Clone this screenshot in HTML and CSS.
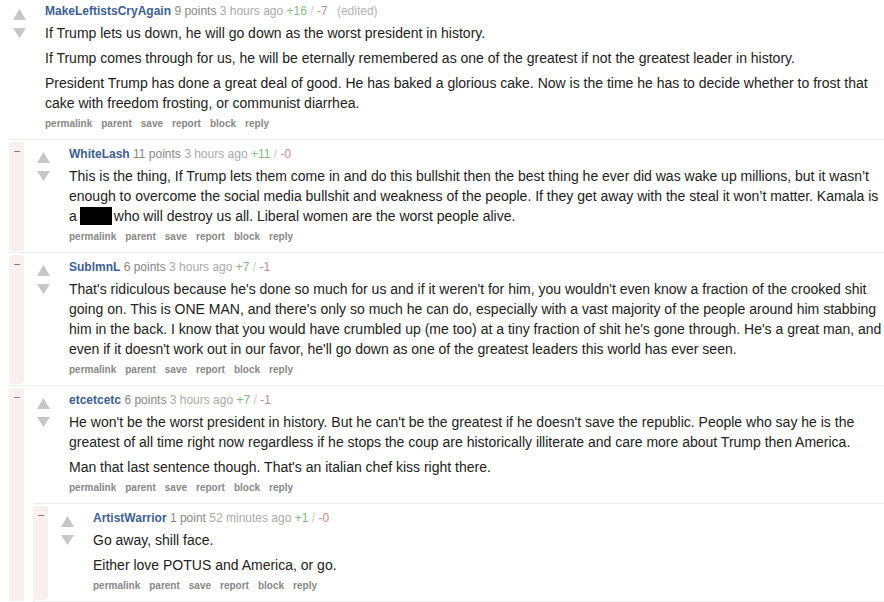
FILE: index.html
```html
<!DOCTYPE html>
<html>
<head>
<meta charset="utf-8">
<link rel="stylesheet" href="styles.css">
</head>
<body>
<div class="thread">
  <div class="comment root">
    <div class="inner">
      <div class="entry">
        <div class="midcol">
          <svg class="arrow" width="13" height="11" viewBox="0 0 13 11"><polygon points="6.5,0 13,11 0,11"/></svg>
          <svg class="arrow down" width="13" height="10" viewBox="0 0 13 10"><polygon points="0,0 13,0 6.5,10"/></svg>
        </div>
        <div class="content">
          <div class="tagline"><a class="author">MakeLeftistsCryAgain</a> <span class="score">9 points</span> <span class="time">3 hours ago</span> <span class="up">+16</span> <span class="slash">/</span> <span class="down">-7</span> <span class="edited">(edited)</span></div>
          <div class="body">
            <p>If Trump lets us down, he will go down as the worst president in history.</p>
            <p>If Trump comes through for us, he will be eternally remembered as one of the greatest if not the greatest leader in history.</p>
            <p>President Trump has done a great deal of good. He has baked a glorious cake. Now is the time he has to decide whether to frost that cake with freedom frosting, or communist diarrhea.</p>
          </div>
          <ul class="buttons"><li>permalink</li><li>parent</li><li>save</li><li>report</li><li>block</li><li>reply</li></ul>
        </div>
      </div>

      <div class="children">
        <div class="comment">
          <div class="stripe"><span class="minus">–</span></div>
          <div class="inner">
            <div class="entry">
              <div class="midcol">
                <svg class="arrow" width="13" height="11" viewBox="0 0 13 11"><polygon points="6.5,0 13,11 0,11"/></svg>
                <svg class="arrow down" width="13" height="10" viewBox="0 0 13 10"><polygon points="0,0 13,0 6.5,10"/></svg>
              </div>
              <div class="content">
                <div class="tagline"><a class="author">WhiteLash</a> <span class="score">11 points</span> <span class="time">3 hours ago</span> <span class="up">+11</span> <span class="slash">/</span> <span class="down">-0</span></div>
                <div class="body">
                  <p>This is the thing, If Trump lets them come in and do this bullshit then the best thing he ever did was wake up millions, but it wasn’t enough to overcome the social media bullshit and weakness of the people. If they get away with the steal it won’t matter. Kamala is a<span class="redact"></span>who will destroy us all. Liberal women are the worst people alive.</p>
                </div>
                <ul class="buttons"><li>permalink</li><li>parent</li><li>save</li><li>report</li><li>block</li><li>reply</li></ul>
              </div>
            </div>
          </div>
        </div>

        <div class="comment">
          <div class="stripe"><span class="minus">–</span></div>
          <div class="inner">
            <div class="entry">
              <div class="midcol">
                <svg class="arrow" width="13" height="11" viewBox="0 0 13 11"><polygon points="6.5,0 13,11 0,11"/></svg>
                <svg class="arrow down" width="13" height="10" viewBox="0 0 13 10"><polygon points="0,0 13,0 6.5,10"/></svg>
              </div>
              <div class="content">
                <div class="tagline"><a class="author">SublmnL</a> <span class="score">6 points</span> <span class="time">3 hours ago</span> <span class="up">+7</span> <span class="slash">/</span> <span class="down">-1</span></div>
                <div class="body">
                  <p>That's ridiculous because he's done so much for us and if it weren't for him, you wouldn't even know a fraction of the crooked shit going on. This is ONE MAN, and there's only so much he can do, especially with a vast majority of the people around him stabbing him in the back. I know that you would have crumbled up (me too) at a tiny fraction of shit he's gone through. He's a great man, and even if it doesn't work out in our favor, he'll go down as one of the greatest leaders this world has ever seen.</p>
                </div>
                <ul class="buttons"><li>permalink</li><li>parent</li><li>save</li><li>report</li><li>block</li><li>reply</li></ul>
              </div>
            </div>
          </div>
        </div>

        <div class="comment">
          <div class="stripe"><span class="minus">–</span></div>
          <div class="inner">
            <div class="entry">
              <div class="midcol">
                <svg class="arrow" width="13" height="11" viewBox="0 0 13 11"><polygon points="6.5,0 13,11 0,11"/></svg>
                <svg class="arrow down" width="13" height="10" viewBox="0 0 13 10"><polygon points="0,0 13,0 6.5,10"/></svg>
              </div>
              <div class="content">
                <div class="tagline"><a class="author">etcetcetc</a> <span class="score">6 points</span> <span class="time">3 hours ago</span> <span class="up">+7</span> <span class="slash">/</span> <span class="down">-1</span></div>
                <div class="body">
                  <p>He won't be the worst president in history. But he can't be the greatest if he doesn't save the republic. People who say he is the greatest of all time right now regardless if he stops the coup are historically illiterate and care more about Trump then America.</p>
                  <p>Man that last sentence though. That's an italian chef kiss right there.</p>
                </div>
                <ul class="buttons"><li>permalink</li><li>parent</li><li>save</li><li>report</li><li>block</li><li>reply</li></ul>
              </div>
            </div>

            <div class="children">
              <div class="comment last">
                <div class="stripe"><span class="minus">–</span></div>
                <div class="inner">
                  <div class="entry">
                    <div class="midcol">
                      <svg class="arrow" width="13" height="11" viewBox="0 0 13 11"><polygon points="6.5,0 13,11 0,11"/></svg>
                      <svg class="arrow down" width="13" height="10" viewBox="0 0 13 10"><polygon points="0,0 13,0 6.5,10"/></svg>
                    </div>
                    <div class="content">
                      <div class="tagline"><a class="author">ArtistWarrior</a> <span class="score">1 point</span> <span class="time">52 minutes ago</span> <span class="up">+1</span> <span class="slash">/</span> <span class="down">-0</span></div>
                      <div class="body">
                        <p>Go away, shill face.</p>
                        <p>Either love POTUS and America, or go.</p>
                      </div>
                      <ul class="buttons"><li>permalink</li><li>parent</li><li>save</li><li>report</li><li>block</li><li>reply</li></ul>
                    </div>
                  </div>
                </div>
              </div>
            </div>
          </div>
        </div>
      </div>
    </div>
  </div>
</div>
</body>
</html>
```

FILE: styles.css
```css
* { box-sizing: border-box; }
html, body {
  margin: 0;
  padding: 0;
  background: #ffffff;
  font-family: "Liberation Sans", Arial, sans-serif;
  color: #222222;
  overflow: hidden;
}
.thread {
  margin-top: -3px;
}
.comment {
  display: flex;
  border-top: 1px solid #ececec;
}
.comment.root {
  border-top: none;
}
.comment.last {
  border-bottom: 1px solid #ececec;
}
.stripe {
  width: 15px;
  flex: none;
  background: #f9efef;
  border-radius: 3px;
  margin: 2px 0 1px;
  padding: 2px 0 0 5px;
}
.minus {
  display: block;
  font-size: 11px;
  line-height: 12px;
  color: #666666;
}
.inner {
  flex: 1;
  min-width: 0;
}
.entry {
  display: flex;
}
.midcol {
  width: 45px;
  flex: none;
  padding: 12px 0 0 13px;
  display: flex;
  flex-direction: column;
}
.arrow {
  display: block;
  fill: #c6c6c6;
}
.arrow.down {
  margin-top: 8px;
}
.content {
  flex: 1;
  min-width: 0;
  padding: 6px 0 8px 0;
}
.tagline {
  font-size: 12px;
  line-height: 16px;
  color: #888888;
  white-space: nowrap;
}
.author {
  font-weight: bold;
  color: #3d5f93;
}
.score { color: #888888; }
.time { color: #aaaaaa; }
.up { color: #82bd82; }
.slash { color: #c8c8c8; }
.down { color: #c98a8a; }
.edited {
  color: #b5b5b5;
  margin-left: 6px;
}
.body {
  margin-top: 4px;
  font-size: 14px;
  line-height: 20px;
}
.body p {
  margin: 0 0 5px;
}
.body p:last-child {
  margin-bottom: 0;
}
.redact {
  display: inline-block;
  width: 32px;
  height: 18px;
  margin: 0 2px 0 3px;
  background: #000000;
  vertical-align: -4px;
}
.buttons {
  list-style: none;
  margin: 4px 0 0;
  padding: 0;
  display: flex;
  gap: 9px;
  font-size: 10px;
  line-height: 14px;
  font-weight: bold;
  color: #888888;
}
.children {
  padding-left: 9px;
}
```
